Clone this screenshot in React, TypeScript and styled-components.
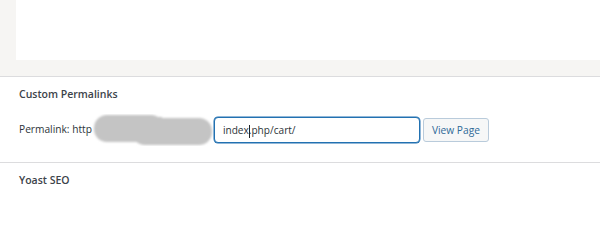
import React from 'react';
import styled, {createGlobalStyle} from 'styled-components';

const GlobalStyle = createGlobalStyle`
    html, body {
        margin: 0;
        padding: 0;
        background: #ffffff;
    }
    body {
        font-family: "Open Sans", "Noto Sans", "Liberation Sans", sans-serif;
        color: #1d2327;
    }`;

const Page = styled.div`
    width: 600px;
    height: 206px;
    overflow: hidden;
    background: #ffffff;`;

const EditorArea = styled.div`
    background: #f6f5f3;
    padding-left: 16px;
    height: 76px;
    border-bottom: 1px solid #dcdcde;`;

const EditorBox = styled.div`
    background: #ffffff;
    height: 60px;`;

const Section = styled.div<{ $bordered?: boolean; $bottom: number }>`
    padding: 10px 19px ${p => p.$bottom}px;
    border-bottom: ${p => p.$bordered ? '1px solid #dcdcde' : 'none'};`;

const SectionTitle = styled.div`
    font-size: 10.5px;
    font-weight: 600;
    line-height: 14px;
    color: #3c434a;`;

const PermalinkRow = styled.div`
    display: flex;
    align-items: center;
    margin-top: 16px;
    height: 26px;`;

const Label = styled.span`
    font-size: 10.2px;
    line-height: 14px;
    color: #2c3338;
    white-space: nowrap;
    margin-bottom: 3px;`;

const Redaction = styled.svg`
    display: block;
    flex: none;`;

const SlugInput = styled.div`
    width: 206px;
    height: 26px;
    box-sizing: border-box;
    border: 1px solid #2271b1;
    box-shadow: 0 0 0 0.5px #2271b1;
    border-radius: 4px;
    display: flex;
    align-items: center;
    padding-left: 8px;
    font-size: 10.1px;
    color: #2c3338;
    background: #ffffff;`;

const Caret = styled.span`
    display: inline-block;
    width: 1px;
    height: 13px;
    background: #1d2327;
    margin: 0 -1px 0 0;
    position: relative;
    top: 1px;`;

const ViewButton = styled.button`
    margin-left: 3px;
    height: 24px;
    width: 66px;
    box-sizing: border-box;
    padding: 0;
    border: 1px solid #b9cbdb;
    border-radius: 3px;
    background: #f6f7f7;
    color: #2f6a98;
    font-family: inherit;
    font-size: 10.2px;
    cursor: pointer;`;

const App: React.FC = () => {
    return (
        <Page>
            <GlobalStyle />
            <EditorArea>
                <EditorBox />
            </EditorArea>
            <Section $bordered $bottom={19}>
                <SectionTitle>Custom Permalinks</SectionTitle>
                <PermalinkRow>
                    <Label>Permalink: http</Label>
                    <Redaction width="122" height="32" viewBox="0 0 122 32">
                        <defs>
                            <filter id="soft" x="-10%" y="-20%" width="120%" height="140%">
                                <feGaussianBlur stdDeviation="0.8" />
                            </filter>
                        </defs>
                        <g fill="#c4c4c4" filter="url(#soft)">
                            <rect x="2" y="1" width="70" height="27" rx="13" />
                            <rect x="40" y="4" width="80" height="27" rx="13" />
                            <rect x="30" y="3" width="40" height="25" />
                        </g>
                    </Redaction>
                    <SlugInput>
                        index<Caret />.php/cart/
                    </SlugInput>
                    <ViewButton>View Page</ViewButton>
                </PermalinkRow>
            </Section>
            <Section $bottom={0}>
                <SectionTitle>Yoast SEO</SectionTitle>
            </Section>
        </Page>
    );
};

export default App;
